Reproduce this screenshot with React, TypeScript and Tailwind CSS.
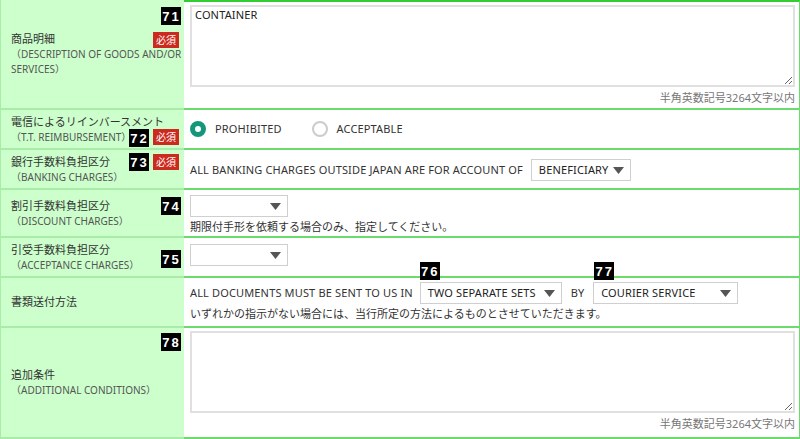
import type { ReactNode } from "react";

const JP = { fontFamily: '"Noto Sans", "Noto Sans CJK JP", sans-serif' };

function Badge({ n, className = "" }: { n: string; className?: string }) {
  return (
    <span
      className={`absolute flex h-[18px] w-[20px] items-center justify-center bg-black pl-[1px] text-[13px] font-bold leading-none tracking-[2px] text-white ${className}`}
      style={{ fontFamily: '"Liberation Sans", Arial, sans-serif' }}
    >
      {n}
    </span>
  );
}

function Required({ className = "" }: { className?: string }) {
  return (
    <span
      className={`absolute flex h-[16px] w-[26px] items-center justify-center bg-[#cc2a1f] text-[10px] leading-none text-white ${className}`}
    >
      必須
    </span>
  );
}

function Arrow() {
  return (
    <svg width="11" height="7" viewBox="0 0 11 7" className="shrink-0">
      <path d="M0 0 L11 0 L5.5 7 Z" fill="#555" />
    </svg>
  );
}

function Select({ value = "", width }: { value?: string; width: string }) {
  return (
    <div
      className={`flex h-[22px] items-center justify-between border border-[#cfcfcf] bg-white pl-[7px] pr-[6px] text-[11px] tracking-[0.15px] text-[#222] ${width}`}
    >
      <span>{value}</span>
      <Arrow />
    </div>
  );
}

function Label({ jp, en }: { jp: string; en?: string }) {
  return (
    <div className="flex flex-col">
      <span className="text-[11px] leading-[16px] text-[#333]">{jp}</span>
      {en && <span className="text-[10px] leading-[15px] text-[#555]">{en}</span>}
    </div>
  );
}

function Row({
  h,
  left,
  right,
  first = false,
}: {
  h: string;
  left: ReactNode;
  right: ReactNode;
  first?: boolean;
}) {
  return (
    <>
      <div
        className={`relative flex flex-col justify-center border-b-2 border-l border-[#a8eca8] border-l-[#a8eca8] bg-[#ccffcc] pl-[10px] ${h}`}
      >
        {left}
      </div>
      <div
        className={`relative flex flex-col border-b-2 border-r border-[#6bdc6b] bg-white pl-[6px] pr-[4px] ${h} ${
          first ? "border-t-2 border-t-[#33cc33]" : ""
        }`}
      >
        {right}
      </div>
    </>
  );
}

function Counter() {
  return (
    <div className="mt-[4px] text-right text-[11px] leading-[14px] text-[#777]">半角英数記号3264文字以内</div>
  );
}

function Radio({ checked, label }: { checked: boolean; label: string }) {
  return (
    <div className="flex items-center gap-[9px]">
      {checked ? (
        <span className="h-[16px] w-[16px] rounded-full border-[5px] border-[#12977a] bg-white" />
      ) : (
        <span className="h-[16px] w-[16px] rounded-full border-2 border-[#cccccc] bg-white" />
      )}
      <span className="text-[11px] tracking-[0.15px] text-[#333]">{label}</span>
    </div>
  );
}

export default function App() {
  return (
    <div className="h-[439px] w-[800px] overflow-hidden bg-white" style={JP}>
      <div className="grid grid-cols-[184px_1fr]">
        <Row
          first
          h="h-[110px]"
          left={
            <>
              <Badge n="71" className="right-[3px] top-[7px]" />
              <Required className="right-[5px] top-[32px]" />
              <Label jp="商品明細" en="（DESCRIPTION OF GOODS AND/OR SERVICES）" />
            </>
          }
          right={
            <div className="pt-[3px]">
              <textarea
                defaultValue="CONTAINER"
                className="block h-[82px] w-full resize border-2 border-[#e0e0e0] px-[3px] py-0 text-[11px] tracking-[0.15px] text-[#222] outline-none"
                style={JP}
              />
              <Counter />
            </div>
          }
        />
        <Row
          h="h-[40px]"
          left={
            <>
              <Badge n="72" className="right-[35px] top-[19px]" />
              <Required className="right-[5px] top-[19px]" />
              <Label jp="電信によるリインバースメント" en="（T.T. REIMBURSEMENT）" />
            </>
          }
          right={
            <div className="flex h-full items-center gap-[30px]">
              <Radio checked label="PROHIBITED" />
              <Radio checked={false} label="ACCEPTABLE" />
            </div>
          }
        />
        <Row
          h="h-[40px]"
          left={
            <>
              <Badge n="73" className="right-[35px] top-[3px]" />
              <Required className="right-[5px] top-[4px]" />
              <Label jp="銀行手数料負担区分" en="（BANKING CHARGES）" />
            </>
          }
          right={
            <div className="flex h-full items-center gap-[8px] pt-[2px] text-[11px] text-[#333]">
              <span className="tracking-[0.15px]">ALL BANKING CHARGES OUTSIDE JAPAN ARE FOR ACCOUNT OF</span>
              <Select value="BENEFICIARY" width="w-[100px]" />
            </div>
          }
        />
        <Row
          h="h-[48px]"
          left={
            <>
              <Badge n="74" className="right-[3px] top-[7px]" />
              <Label jp="割引手数料負担区分" en="（DISCOUNT CHARGES）" />
            </>
          }
          right={
            <div className="flex flex-col pt-[5px]">
              <Select width="w-[98px]" />
              <span className="mt-[2px] text-[11px] leading-[16px] text-[#333]">
                期限付手形を依頼する場合のみ、指定してください。
              </span>
            </div>
          }
        />
        <Row
          h="h-[40px]"
          left={
            <>
              <Badge n="75" className="right-[3px] top-[12px]" />
              <Label jp="引受手数料負担区分" en="（ACCEPTANCE CHARGES）" />
            </>
          }
          right={
            <div className="flex h-full items-center pb-[4px]">
              <Select width="w-[98px]" />
            </div>
          }
        />
        <Row
          h="h-[50px]"
          left={<Label jp="書類送付方法" />}
          right={
            <div className="flex flex-col pt-[4px]">
              <div className="flex items-center text-[11px] text-[#333]">
                <span className="tracking-[0.15px]">ALL DOCUMENTS MUST BE SENT TO US IN</span>
                <div className="relative ml-[7px]">
                  <Badge n="76" className="-top-[20px] left-0 h-[16px]" />
                  <Select value="TWO SEPARATE SETS" width="w-[142px]" />
                </div>
                <span className="ml-[9px]">BY</span>
                <div className="relative ml-[9px]">
                  <Badge n="77" className="-top-[20px] left-[1px] h-[16px]" />
                  <Select value="COURIER SERVICE" width="w-[145px]" />
                </div>
              </div>
              <span className="mt-[2px] text-[11px] leading-[16px] text-[#333]">
                いずれかの指示がない場合には、当行所定の方法によるものとさせていただきます。
              </span>
            </div>
          }
        />
        <Row
          h="h-[111px]"
          left={
            <>
              <Badge n="78" className="right-[3px] top-[5px]" />
              <Label jp="追加条件" en="（ADDITIONAL CONDITIONS）" />
            </>
          }
          right={
            <div className="pt-[3px]">
              <textarea
                className="block h-[82px] w-full resize border-2 border-[#e0e0e0] px-[3px] py-[2px] text-[11px] outline-none"
                style={JP}
              />
              <Counter />
            </div>
          }
        />
      </div>
    </div>
  );
}
